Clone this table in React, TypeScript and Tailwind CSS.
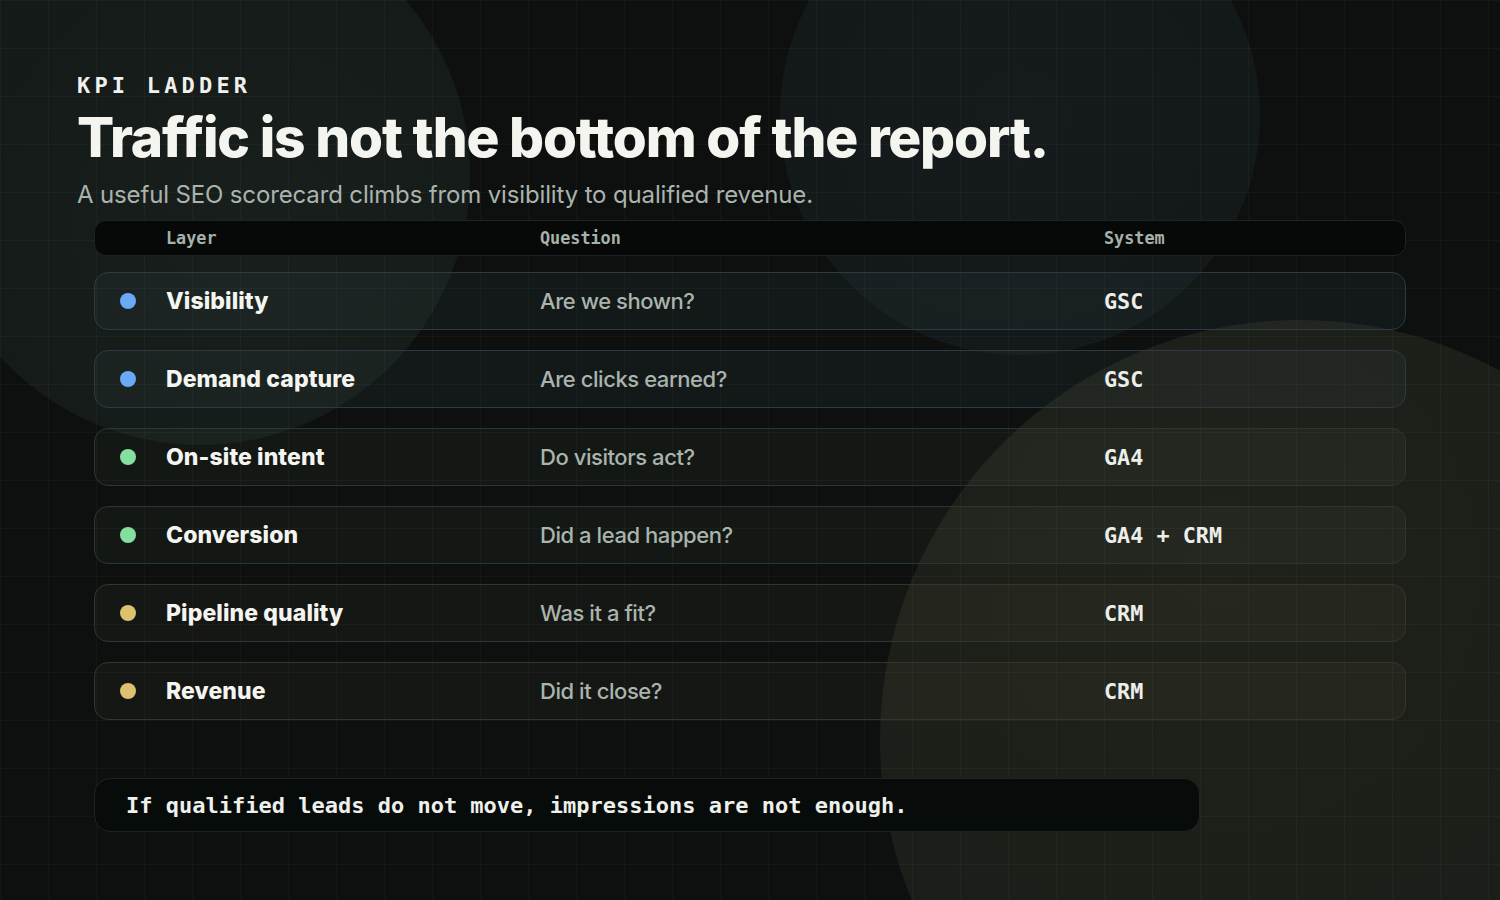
import React from "react";

const rows = [
  { layer: "Visibility", q: "Are we shown?", sys: "GSC", dot: "bg-[#6aa9f5]", border: "border-[#2b3a45]", bg: "bg-[rgba(120,150,170,0.06)]" },
  { layer: "Demand capture", q: "Are clicks earned?", sys: "GSC", dot: "bg-[#6aa9f5]", border: "border-[#2b3a45]", bg: "bg-[rgba(120,150,170,0.06)]" },
  { layer: "On-site intent", q: "Do visitors act?", sys: "GA4", dot: "bg-[#86dfa2]", border: "border-[#283a2f]", bg: "bg-[rgba(130,170,140,0.05)]" },
  { layer: "Conversion", q: "Did a lead happen?", sys: "GA4 + CRM", dot: "bg-[#86dfa2]", border: "border-[#283a2f]", bg: "bg-[rgba(130,170,140,0.05)]" },
  { layer: "Pipeline quality", q: "Was it a fit?", sys: "CRM", dot: "bg-[#dcc26e]", border: "border-[#37352a]", bg: "bg-[rgba(170,160,120,0.05)]" },
  { layer: "Revenue", q: "Did it close?", sys: "CRM", dot: "bg-[#dcc26e]", border: "border-[#37352a]", bg: "bg-[rgba(170,160,120,0.05)]" },
];

const sans = "font-['Inter','Noto_Sans',sans-serif]";
const mono = "font-['DejaVu_Sans_Mono','Liberation_Mono',monospace]";

export default function App() {
  return (
    <div className="relative w-[1500px] h-[900px] overflow-hidden bg-[#0d100f]">
      {/* soft background circles */}
      <div className="absolute left-[-70px] top-[-95px] w-[540px] h-[540px] rounded-full bg-[radial-gradient(circle_at_60%_60%,rgba(120,160,140,0.10),rgba(120,160,140,0.06))]" />
      <div className="absolute left-[780px] top-[-125px] w-[480px] h-[480px] rounded-full bg-[radial-gradient(circle_at_50%_50%,rgba(110,150,180,0.085),rgba(110,150,180,0.055))]" />
      <div className="absolute left-[880px] top-[320px] w-[840px] h-[840px] rounded-full bg-[radial-gradient(circle_at_40%_30%,rgba(190,180,130,0.10),rgba(190,180,130,0.07))]" />
      {/* grid */}
      <div className="absolute inset-0 bg-[linear-gradient(rgba(255,255,255,0.03)_1px,transparent_1px),linear-gradient(90deg,rgba(255,255,255,0.03)_1px,transparent_1px)] bg-[size:48px_48px]" />

      <div className="relative flex flex-col pl-[77px] pt-[72px]">
        <div className={`${mono} text-[22px] leading-[28px] font-bold tracking-[0.19em] text-[#f0f1ec]`}>KPI LADDER</div>
        <h1 className={`${sans} mt-[7px] text-[55px] leading-[60px] font-extrabold tracking-[-0.0215em] text-[#f4f5ef]`}>
          Traffic is not the bottom of the report.
        </h1>
        <p className={`${sans} mt-[13px] text-[24px] leading-[30px] tracking-[-0.006em] text-[#aab4ae]`}>
          A useful SEO scorecard climbs from visibility to qualified revenue.
        </p>

        <div className="ml-[17px] mt-[10px] w-[1312px] flex flex-col">
          <div className="grid grid-cols-[71px_374px_564px_1fr] items-center h-[36px] rounded-[12px] border border-[#1c2321] bg-[#060908]">
            <div />
            <div className={`${mono} pt-[1px] text-[16.8px] font-bold text-[#a7b1ab]`}>Layer</div>
            <div className={`${mono} pt-[1px] text-[16.8px] font-bold text-[#a7b1ab]`}>Question</div>
            <div className={`${mono} pt-[1px] text-[16.8px] font-bold text-[#a7b1ab]`}>System</div>
          </div>

          <div className="mt-[16px] flex flex-col gap-[20px]">
            {rows.map((r) => (
              <div
                key={r.layer}
                className={`grid grid-cols-[71px_374px_564px_1fr] items-center h-[58px] rounded-[14px] border ${r.border} ${r.bg}`}
              >
                <div className="pl-[25px]">
                  <div className={`w-[16px] h-[16px] rounded-full ${r.dot}`} />
                </div>
                <div className={`${sans} pt-[1px] text-[23px] font-extrabold tracking-[0.004em] text-[#f5f5f0]`}>{r.layer}</div>
                <div className={`${sans} pt-[1px] text-[22px] font-medium tracking-[-0.02em] text-[#a9b4ad]`}>{r.q}</div>
                <div className={`${mono} pt-[2px] text-[21.8px] font-bold text-[#eceee9]`}>{r.sys}</div>
              </div>
            ))}
          </div>
        </div>

        <div className="ml-[17px] mt-[58px] w-[1106px] h-[54px] flex items-center rounded-[16px] border border-[#1d2422] bg-[#070b0a] pl-[31px]">
          <span className={`${mono} text-[22px] font-bold text-[#eef0eb]`}>
            If qualified leads do not move, impressions are not enough.
          </span>
        </div>
      </div>
    </div>
  );
}
